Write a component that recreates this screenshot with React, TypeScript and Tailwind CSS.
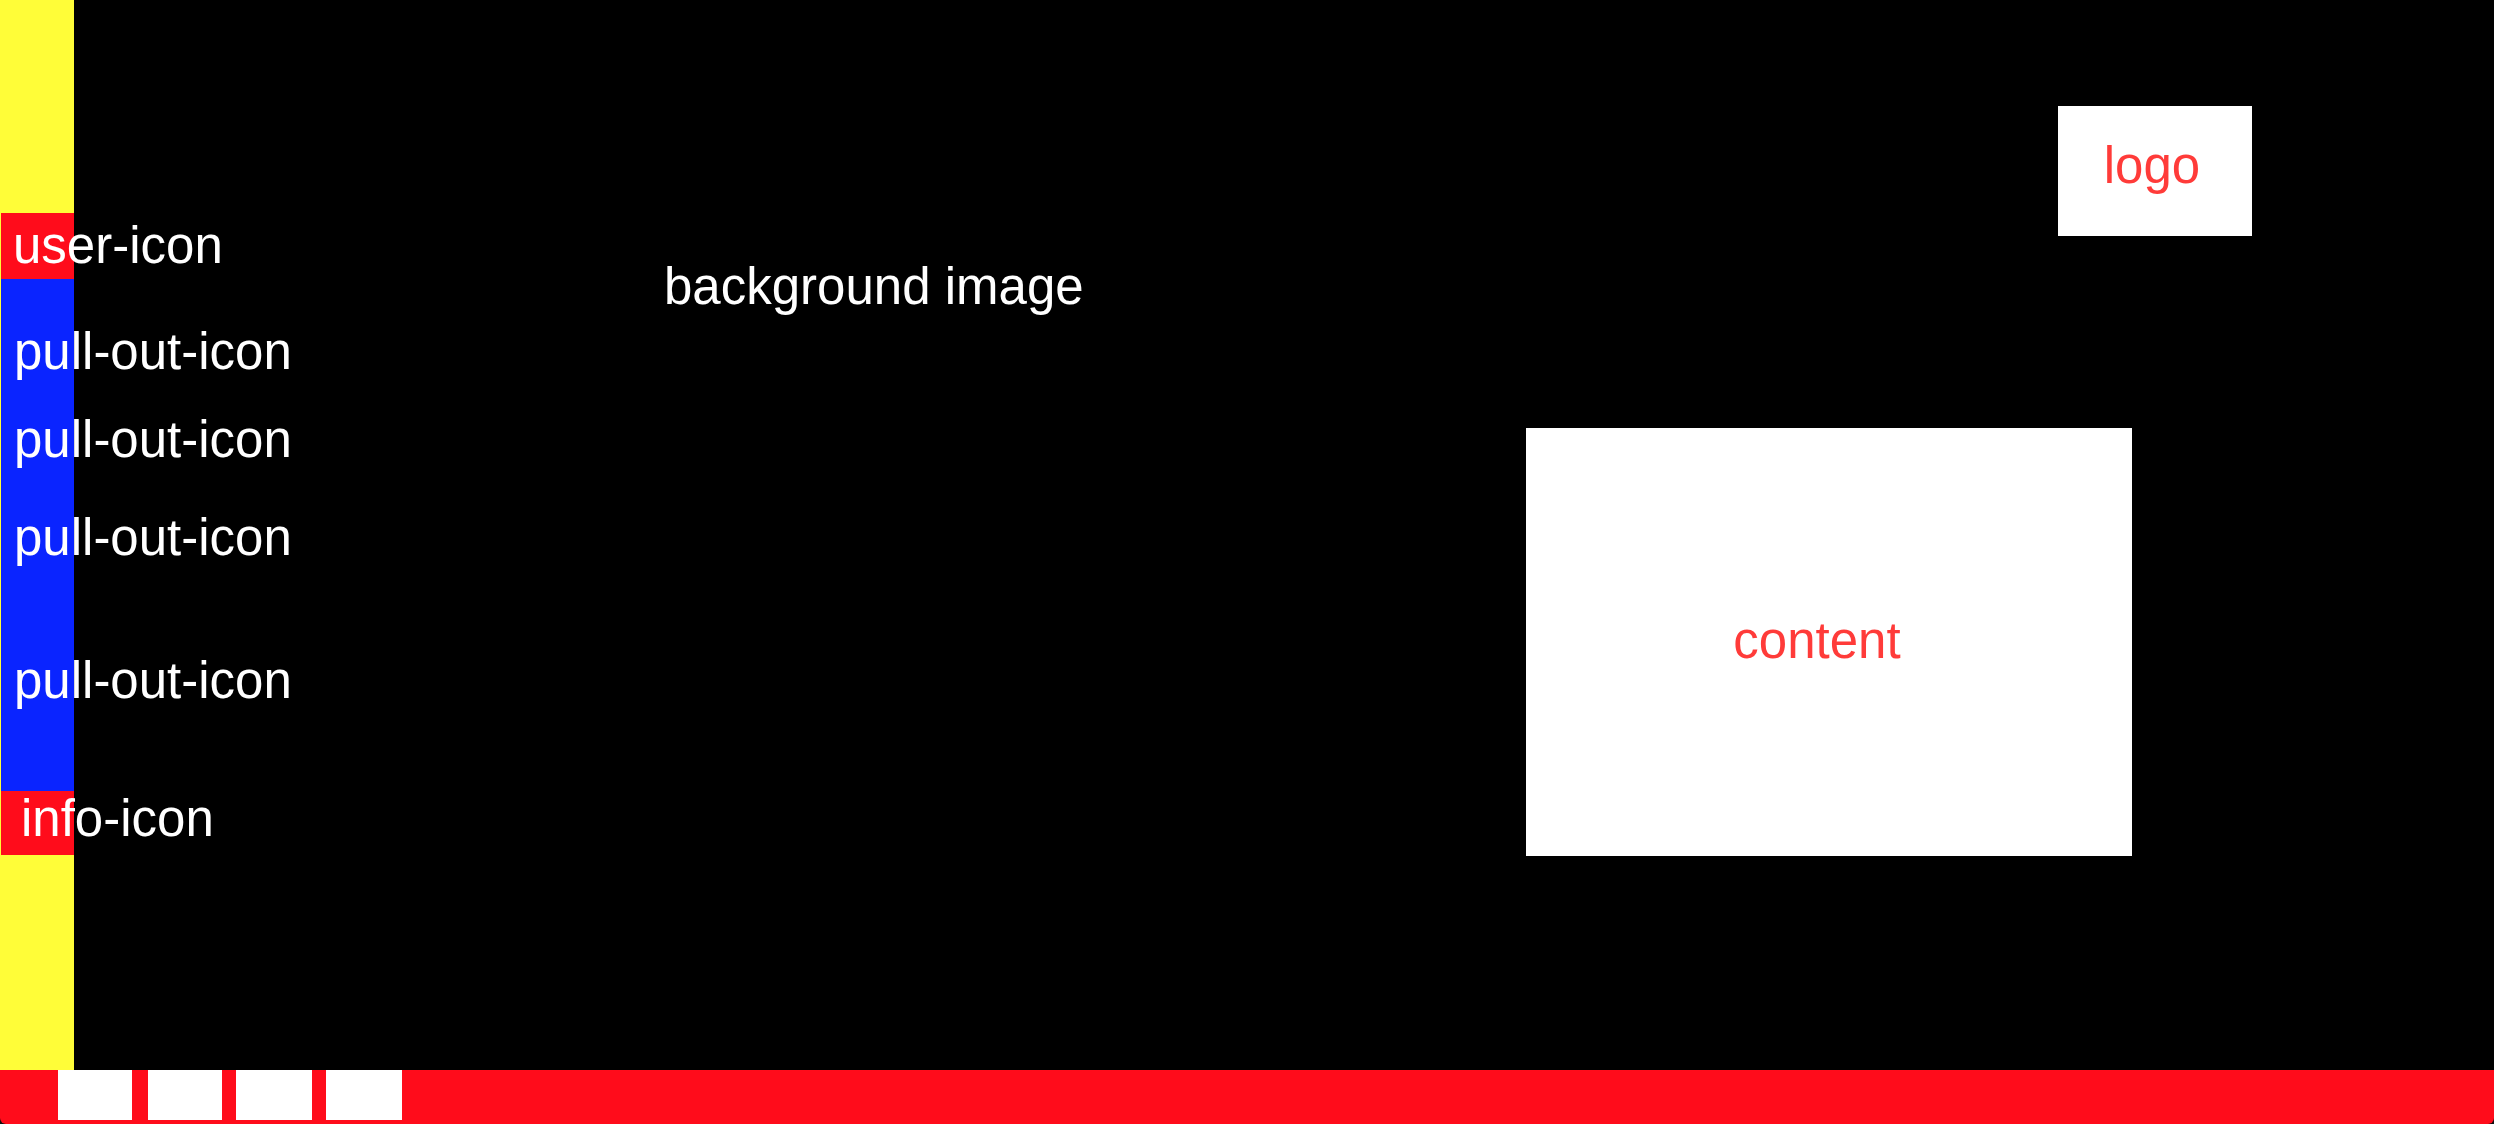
const pullOuts = [
  { id: 'first', spacing: 'pt-[45px] pl-[13px]' },
  { id: 'second', spacing: 'pt-8 pl-[13px]' },
  { id: 'third', spacing: 'pt-[42px] pl-[13px]' },
  { id: 'fourth', spacing: 'pt-[87px] pl-[13px]' },
];

const tiles = [
  { id: 'one', size: 'w-[74px] mr-4' },
  { id: 'two', size: 'w-[74px] mr-3.5' },
  { id: 'three', size: 'w-[76px] mr-3.5' },
  { id: 'four', size: 'w-[76px]' },
];

function Sidebar() {
  return (
    <nav
      aria-label="Tools"
      className="flex w-[74px] shrink-0 flex-col bg-[#fffd38] pt-[213px] pl-px whitespace-nowrap text-white"
    >
      <button type="button" className="flex h-[66px] w-full items-start bg-[#ff0c1b] pt-[5px] pl-3">
        user-icon
      </button>
      <div className="flex h-[512px] flex-col bg-[#0a24ff]">
        {pullOuts.map(({ id, spacing }) => (
          <button key={id} type="button" className={`flex w-full ${spacing}`}>
            pull-out-icon
          </button>
        ))}
      </div>
      <button type="button" className="flex h-16 w-full items-start bg-[#ff0c1b] pl-5">
        info-icon
      </button>
    </nav>
  );
}

function Stage() {
  return (
    <main className="flex flex-1 justify-between">
      <p className="pt-[259px] pl-[590px] whitespace-nowrap text-white">background image</p>
      <div className="flex flex-1 flex-col items-end pt-[106px] text-[#ff3b39]">
        <div className="mr-[242px] flex h-[130px] w-[194px] items-start justify-center bg-white pt-8 pr-1.5">
          logo
        </div>
        <section className="mt-48 mr-[362px] flex h-[428px] w-[606px] items-center justify-center bg-white pr-6 pb-0.5">
          content
        </section>
      </div>
    </main>
  );
}

export default function App() {
  return (
    <div className="bg-[#111111]">
      <div className="flex min-h-screen flex-col overflow-hidden rounded-b-md bg-black font-['Liberation_Sans',Arial,sans-serif] text-[51px] leading-[56px]">
        <div className="flex flex-1">
          <Sidebar />
          <Stage />
        </div>
        <footer className="flex h-[54px] bg-[#ff0c1b] pl-[58px]">
          {tiles.map(({ id, size }) => (
            <button key={id} type="button" aria-label={`Tile ${id}`} className={`h-[50px] bg-white ${size}`} />
          ))}
        </footer>
      </div>
    </div>
  );
}
